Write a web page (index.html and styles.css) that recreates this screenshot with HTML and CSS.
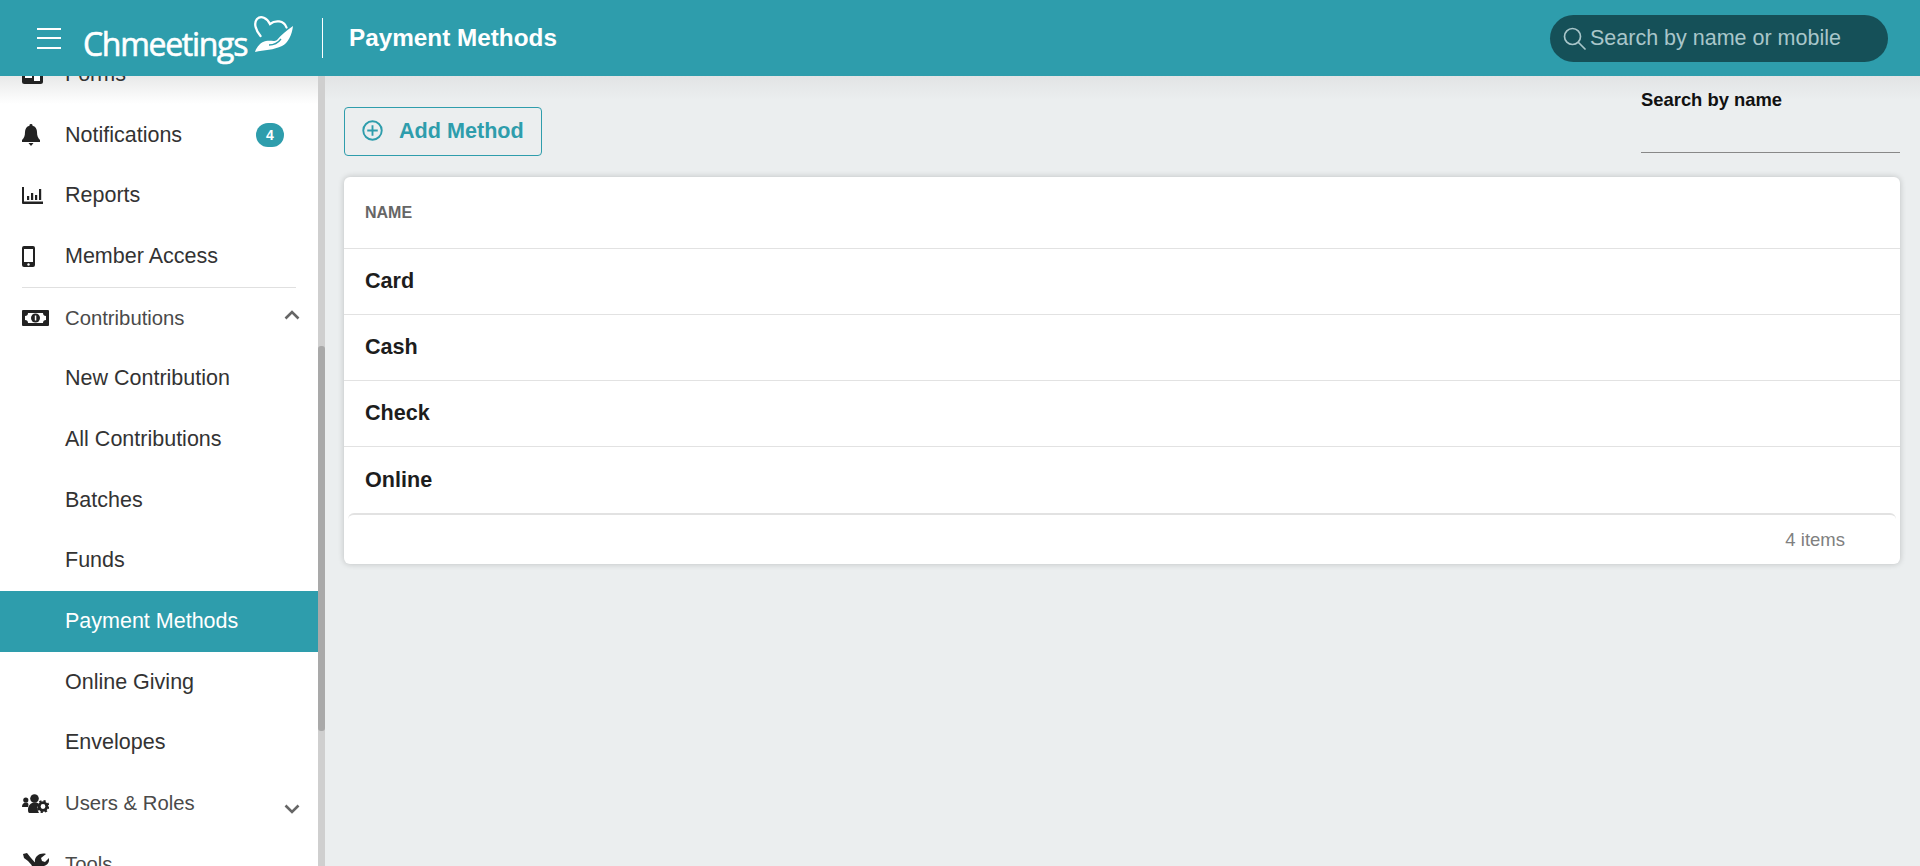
FILE: index.html
```html
<!DOCTYPE html>
<html lang="en">
<head>
<meta charset="utf-8">
<title>Payment Methods</title>
<link rel="stylesheet" href="styles.css">
</head>
<body>
<header class="topbar">
  <button class="burger" aria-label="Menu"><span></span><span></span><span></span></button>
  <div class="logo">
    <span class="logo-text">Chmeetings</span>
    <svg class="logo-mark" viewBox="0 0 40 40" width="40" height="40">
      <path d="M6.500 21 C1.500 15 -0.500 8 3 4 C7 0 13 3 16 9 C21 5 30 5 32.500 12.500" fill="none" stroke="#fff" stroke-width="2.300" stroke-linecap="round"/>
      <path d="M1 37 C3 31 7 27 12 26 C17 25 20 27 23 25 C27 20 33 15 39 11 C38 20 34 28 28 31 C20 35 10 35 1 37 Z" fill="#fff"/>
      <path d="M15 30 C20 30 24 28 27 24" fill="none" stroke="#2e9dac" stroke-width="1.300"/>
    </svg>
  </div>
  <h1 class="page-title">Payment Methods</h1>
  <div class="global-search">
    <svg viewBox="0 0 24 24" width="24" height="24"><circle cx="10.500" cy="10.500" r="8" fill="none" stroke="#a9c6ca" stroke-width="1.700"/><path d="M16.500 16.500 L23 23" stroke="#a9c6ca" stroke-width="1.700" stroke-linecap="round"/></svg>
    <span>Search by name or mobile</span>
  </div>
</header>
<div class="shell">
  <aside class="sidebar">
    <nav class="nav">
      <a class="item"><svg class="ico" width="21" height="19" viewBox="0 0 21 19"><rect width="21" height="19" rx="2.500" fill="#222"/><path d="M3 3h15v3H3zM3 9h7v4H3zM12 9h6v7h-6z" fill="#fff"/></svg><span>Forms</span></a>
      <a class="item"><svg class="ico" width="18" height="22" viewBox="0 0 18 22"><path d="M9 0a1.500 1.500 0 0 1 1.500 1.700C13.500 2.400 15 5 15 8c0 4 1 6 3 8v2H0v-2c2-2 3-4 3-8 0-3 1.500-5.600 4.500-6.300A1.500 1.500 0 0 1 9 0z" fill="#222"/><path d="M6.500 19h5L9 22z" fill="#222"/></svg><span>Notifications</span><b class="badge">4</b></a>
      <a class="item"><svg class="ico" width="21" height="17" viewBox="0 0 21 17"><path d="M0 0h2v14.500h19V17H1a1 1 0 0 1-1-1z" fill="#222"/><path d="M5 9h2.200v4H5zM9 6h2.200v7H9zM13 8h2.200v5H13zM17 2h2.200v11H17z" fill="#222"/></svg><span>Reports</span></a>
      <a class="item"><svg class="ico" width="13" height="21" viewBox="0 0 13 21"><path d="M2 0h9a2 2 0 0 1 2 2v17a2 2 0 0 1-2 2H2a2 2 0 0 1-2-2V2a2 2 0 0 1 2-2zm0 3v13h9V3z" fill="#222" fill-rule="evenodd"/><circle cx="6.500" cy="18.500" r="1.200" fill="#fff"/></svg><span>Member Access</span></a>
      <hr class="rule">
      <a class="item group"><svg class="ico" width="27" height="16" viewBox="0 0 27 16"><path d="M1 0h25a1 1 0 0 1 1 1v14a1 1 0 0 1-1 1H1a1 1 0 0 1-1-1V1a1 1 0 0 1 1-1zm5 3a3 3 0 0 1-3 3v4a3 3 0 0 1 3 3h15a3 3 0 0 1 3-3V6a3 3 0 0 1-3-3z" fill="#222" fill-rule="evenodd"/><circle cx="13.500" cy="8" r="4.500" fill="#222"/><path d="M12.800 5.500h1.500v5h-1.500z" fill="#fff"/></svg><span>Contributions</span><svg class="chev chev-up" viewBox="0 0 16 10"><path d="M1.500 8.500 L8 2 L14.500 8.500" fill="none" stroke="#666" stroke-width="2.600"/></svg></a>
      <a class="item sub">New Contribution</a>
      <a class="item sub">All Contributions</a>
      <a class="item sub">Batches</a>
      <a class="item sub">Funds</a>
      <a class="item sub active">Payment Methods</a>
      <a class="item sub">Online Giving</a>
      <a class="item sub">Envelopes</a>
      <a class="item group"><svg class="ico" width="27" height="19" viewBox="0 0 27 19"><circle cx="12.500" cy="4.500" r="4.300" fill="#222"/><circle cx="3.800" cy="6" r="2.600" fill="#222"/><path d="M0 13c0-3 1.500-4.500 4-4.500S7 10 6 13z" fill="#222"/><path d="M6 16c0-5 3-7.500 7-7.500 2 0 3 .5 4 1.500-2 2-2 6 0 9H7.500C6.500 19 6 18 6 16z" fill="#222"/><circle cx="21" cy="12.500" r="3.800" fill="none" stroke="#222" stroke-width="2.800"/><circle cx="21" cy="12.500" r="5.500" fill="none" stroke="#222" stroke-width="2" stroke-dasharray="2.200 2.100"/></svg><span>Users &amp; Roles</span><svg class="chev chev-down" viewBox="0 0 16 10"><path d="M1.500 1.500 L8 8 L14.500 1.500" fill="none" stroke="#666" stroke-width="2.600"/></svg></a>
      <a class="item group"><svg class="ico" width="27" height="22" viewBox="0 0 27 22"><path d="M1 1l4-1 4 5 8 9-3 3-8-9-4-3z" fill="#222"/><path d="M24 1l-5 4 1 3 3 1 4-4c1 5-3 9-8 8L8 21c-2 1-4-1-3-3L13 9c-1-5 5-10 11-8z" fill="#222"/></svg><span>Tools</span></a>
    </nav>
  </aside>
  <div class="scrollbar"><div class="thumb"></div></div>
  <main class="main">
    <div class="toolbar">
      <button class="add-btn">
        <svg viewBox="0 0 20 20" width="21" height="21"><circle cx="10" cy="10" r="8.800" fill="none" stroke="#2e9dac" stroke-width="1.800"/><path d="M10 5v10M5 10h10" stroke="#2e9dac" stroke-width="1.800"/></svg>
        <span>Add Method</span>
      </button>
      <div class="filter">
        <label>Search by name</label>
        <div class="filter-line"></div>
      </div>
    </div>
    <section class="card">
      <div class="head">NAME</div>
      <div class="row">Card</div>
      <div class="row">Cash</div>
      <div class="row">Check</div>
      <div class="row">Online</div>
      <div class="foot">4 items</div>
    </section>
  </main>
</div>
</body>
</html>
```
FILE: styles.css
```css
* { box-sizing: border-box; }
html, body { margin: 0; height: 100%; overflow: hidden; }
body { font-family: "Liberation Sans", Arial, sans-serif; color: #1d1d1d; background: #ebeeef; }

.topbar {
  height: 76px; background: #2e9dac; display: flex; align-items: center;
  position: relative; z-index: 2; color: #fff;
}
.burger {
  width: 24px; height: 21px; margin-left: 37px; padding: 0; border: 0; background: none;
  display: flex; flex-direction: column; justify-content: space-between;
}
.burger span { display: block; height: 2px; background: #fff; }
.logo { display: flex; align-items: flex-start; margin-left: 22px; width: 239px; height: 44px; }
.logo-text {
  font-family: "Open Sans", sans-serif; font-size: 32px; letter-spacing: -1.300px; line-height: 36px;
  margin-top: 10px; width: 171px; flex: none; -webkit-text-stroke: 0.600px #fff; white-space: nowrap;
}
.logo-mark { margin-top: -1px; flex: none; }
.page-title {
  margin: 0; height: 40px; border-left: 1px solid #fff; padding-left: 26px;
  font-size: 24.300px; font-weight: 700; line-height: 39px;
}
.global-search {
  margin-left: auto; margin-right: 32px; width: 338px; height: 47px; border-radius: 24px;
  background: #155058; color: #a9c6ca; display: flex; align-items: center; gap: 4px;
  padding-left: 12px; font-size: 21.500px;
}

.shell { display: flex; height: 790px; }
.sidebar { width: 318px; background: #fff; overflow: hidden; position: relative; flex: none; }
.sidebar::before {
  content: ""; position: absolute; left: 0; right: 0; top: 0; height: 28px;
  background: linear-gradient(#e8e9e9, rgba(255,255,255,0));
}
.nav { margin-top: -32px; position: relative; }
.item {
  display: grid; grid-template-columns: 43px 1fr auto; align-items: center; height: 60.700px;
  padding: 0 18px 0 22px; font-size: 21.500px; color: #333;
}
.group { font-size: 20.300px; color: #4a4a4a; }
.sub { display: flex; padding-left: 65px; }
.active { background: #2e9dac; color: #fff; }
.rule { margin: 0 22px; border: 0; border-top: 1px solid #e0e0e0; height: 1px; }
.badge {
  margin-right: 16px; width: 28px; height: 24px; border-radius: 12px;
  background: #2e9dac; color: #fff; font-size: 14px; text-align: center; line-height: 24px;
}
.chev { width: 16px; height: 10px; }
.chev-up { margin-top: -7px; }
.chev-down { margin-top: 10px; }

.scrollbar { width: 7px; background: #cfcfcf; position: relative; flex: none; }
.thumb { position: absolute; left: 0; right: 0; top: 270px; height: 385px; background: #a9a9a9; border-radius: 3px; }

.main {
  flex: 1; padding: 0 20px 0 19px; min-width: 0;
  background: linear-gradient(#e2e4e5, #ebeeef 24px);
}
.toolbar { display: flex; justify-content: space-between; align-items: flex-start; height: 101px; }
.add-btn {
  margin-top: 31px; width: 198px; height: 49px; border: 1px solid #2e9dac; border-radius: 4px; background: none;
  color: #2e9dac; font: 700 21.600px "Liberation Sans", Arial, sans-serif;
  display: flex; align-items: center; gap: 16px; padding: 0 0 2px 17px;
}
.filter { width: 259px; margin-top: 12px; }
.filter label { display: block; font-size: 18.400px; font-weight: 700; color: #111; line-height: 23px; }
.filter-line { margin-top: 41px; border-bottom: 1px solid #888; }

.card { background: #fff; border-radius: 6px; box-shadow: 0 0 6px rgba(0,0,0,.2); overflow: hidden; }
.head {
  height: 72px; padding-left: 21px; display: flex; align-items: center;
  font-size: 16px; font-weight: 700; color: #666; border-bottom: 1px solid #e2e2e2;
}
.row {
  height: 66px; padding: 0 0 1px 21px; display: flex; align-items: center;
  font-size: 21.600px; font-weight: 700; color: #1d1d1d; border-bottom: 1px solid #e2e2e2;
}
.row:nth-last-child(2) { border-bottom: 0; }
.foot {
  margin: 0 4px; height: 51px; border-top: 2px solid #e2e2e2; border-radius: 6px 6px 0 0;
  display: flex; align-items: center; justify-content: flex-end; padding-right: 51px;
  font-size: 18.500px; color: #808080;
}
```
